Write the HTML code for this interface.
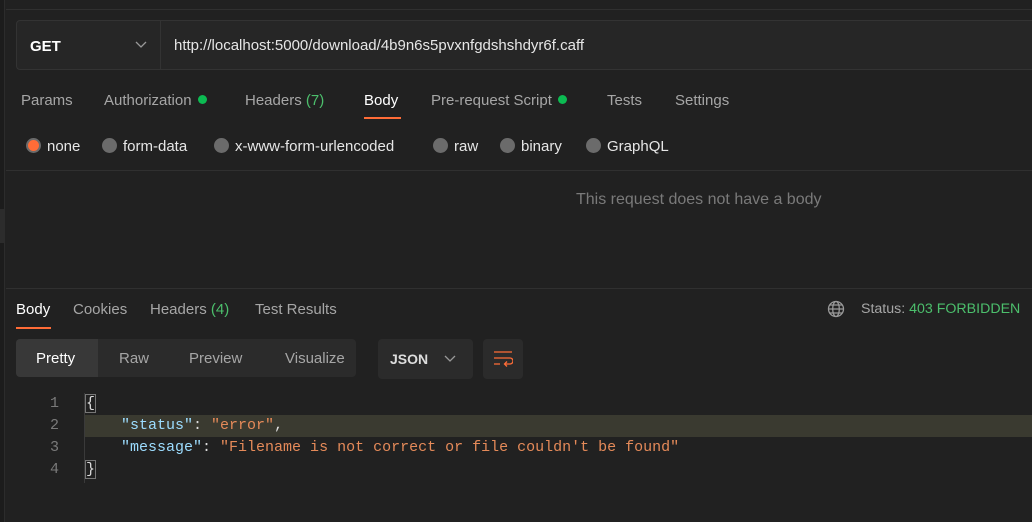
<!DOCTYPE html>
<html><head><meta charset="utf-8"><style>
*{margin:0;padding:0;box-sizing:border-box}
body{width:1032px;height:522px;background:#212121;font-family:"Liberation Sans",sans-serif;color:#a6a6a6;position:relative;overflow:hidden;font-size:15px}
.a{position:absolute;white-space:nowrap}
.line{position:absolute;left:6px;right:0;height:1px;background:#303030}
.dot{display:inline-block;width:9px;height:9px;border-radius:50%;background:#0cbb52;margin-left:6px;vertical-align:1px}
.rad{display:inline-block;width:15px;height:15px;border-radius:50%;background:#6b6b6b;vertical-align:-2px;margin-right:6px}
.mono{font-family:"Liberation Mono",monospace;font-size:15px}
</style></head><body>
<div class="a" style="left:0;top:0;width:5px;height:522px;background:#1c1c1c;border-right:1px solid #2c2c2c"></div>
<div class="a" style="left:0;top:209px;width:5px;height:34px;background:#2c2c2c"></div>
<div class="line" style="top:9px"></div>
<div class="a" style="left:16px;top:20px;width:1040px;height:50px;border:1px solid #333;border-radius:4px;background:#262626"></div>
<div class="a" style="left:160px;top:21px;width:1px;height:48px;background:#333"></div>
<div class="a" style="left:30px;top:38px;color:#fff;font-weight:bold;font-size:15px">GET</div>
<svg class="a" style="left:135px;top:41px" width="12" height="8"><path d="M1 1l5 5 5-5" stroke="#999" fill="none" stroke-width="1.3"/></svg>
<div class="a" style="left:174px;top:37px;color:#e6e6e6">http://localhost:5000/download/4b9n6s5pvxnfgdshshdyr6f.caff</div>
<div class="a" style="left:21px;top:92px">Params</div>
<div class="a" style="left:104px;top:92px">Authorization<span class="dot"></span></div>
<div class="a" style="left:245px;top:92px">Headers <span style="color:#4cbf6c">(7)</span></div>
<div class="a" style="left:364px;top:92px;color:#fff">Body</div>
<div class="a" style="left:364px;top:117px;width:37px;height:2px;background:#ff6c37"></div>
<div class="a" style="left:431px;top:92px">Pre-request Script<span class="dot"></span></div>
<div class="a" style="left:607px;top:92px">Tests</div>
<div class="a" style="left:675px;top:92px">Settings</div>
<div class="a" style="left:26px;top:138px;color:#e6e6e6"><span class="rad" style="background:#ff6c37;border:2px solid #6b6b6b"></span>none</div>
<div class="a" style="left:102px;top:138px;color:#e6e6e6"><span class="rad"></span>form-data</div>
<div class="a" style="left:214px;top:138px;color:#e6e6e6"><span class="rad"></span>x-www-form-urlencoded</div>
<div class="a" style="left:433px;top:138px;color:#e6e6e6"><span class="rad"></span>raw</div>
<div class="a" style="left:500px;top:138px;color:#e6e6e6"><span class="rad"></span>binary</div>
<div class="a" style="left:586px;top:138px;color:#e6e6e6"><span class="rad"></span>GraphQL</div>
<div class="line" style="top:170px"></div>
<div class="a" style="left:576px;top:191px;color:#7a7a7a;font-size:16px">This request does not have a body</div>
<div class="line" style="top:288px"></div>
<div class="a" style="left:16px;top:301px;color:#fff">Body</div>
<div class="a" style="left:16px;top:327px;width:35px;height:2px;background:#ff6c37"></div>
<div class="a" style="left:73px;top:301px">Cookies</div>
<div class="a" style="left:150px;top:301px">Headers <span style="color:#4cbf6c">(4)</span></div>
<div class="a" style="left:255px;top:301px">Test Results</div>
<svg class="a" style="left:827px;top:300px" width="18" height="18" viewBox="0 0 18 18" fill="none" stroke="#999" stroke-width="1.3"><circle cx="9" cy="9" r="7.5"/><ellipse cx="9" cy="9" rx="3.3" ry="7.5"/><path d="M1.5 9h15M3 5h12M3 13h12"/></svg>
<div class="a" style="left:861px;top:301px;font-size:14.2px">Status: <span style="color:#4cbf6c">403 FORBIDDEN</span></div>
<div class="a" style="left:16px;top:339px;width:340px;height:38px;background:#2b2b2b;border-radius:4px"></div>
<div class="a" style="left:16px;top:339px;width:82px;height:38px;background:#383838;border-radius:4px 0 0 4px"></div>
<div class="a" style="left:36px;top:350px;color:#fff">Pretty</div>
<div class="a" style="left:119px;top:350px">Raw</div>
<div class="a" style="left:189px;top:350px">Preview</div>
<div class="a" style="left:285px;top:350px">Visualize</div>
<div class="a" style="left:378px;top:339px;width:95px;height:40px;background:#2b2b2b;border-radius:4px"></div>
<div class="a" style="left:390px;top:351px;color:#ddd;font-weight:bold;font-size:14px">JSON</div>
<svg class="a" style="left:444px;top:355px" width="12" height="8"><path d="M1 1l5 5 5-5" stroke="#999" fill="none" stroke-width="1.3"/></svg>
<div class="a" style="left:483px;top:339px;width:40px;height:40px;background:#2b2b2b;border-radius:4px"></div>
<svg class="a" style="left:493px;top:349px" width="20" height="20" fill="none" stroke="#ff6c37" stroke-width="1.3"><path d="M1 3h18M1 9h16a3 3 0 0 1 0 6h-5M14 12.5l-2.5 2.5 2.5 2.5M1 15h6"/></svg>
<div class="a" style="left:84px;top:415px;right:0;height:22px;background:#3a3a30"></div>
<div class="a" style="left:84px;top:393px;width:1px;height:90px;background:#3a3a3a"></div>
<div class="a mono" style="left:50px;top:393px;color:#7a7a7a;line-height:22px">1<br>2<br>3<br>4</div>
<div class="a mono" style="left:85px;top:393px;line-height:22px;color:#ddd"><span style="border:1px solid #777">{</span><br>&nbsp;&nbsp;&nbsp;&nbsp;<span style="color:#9cdcfe">"status"</span>: <span style="color:#e58a59">"error"</span>,<br>&nbsp;&nbsp;&nbsp;&nbsp;<span style="color:#9cdcfe">"message"</span>: <span style="color:#e58a59">"Filename is not correct or file couldn't be found"</span><br><span style="border:1px solid #777">}</span></div>
</body></html>
